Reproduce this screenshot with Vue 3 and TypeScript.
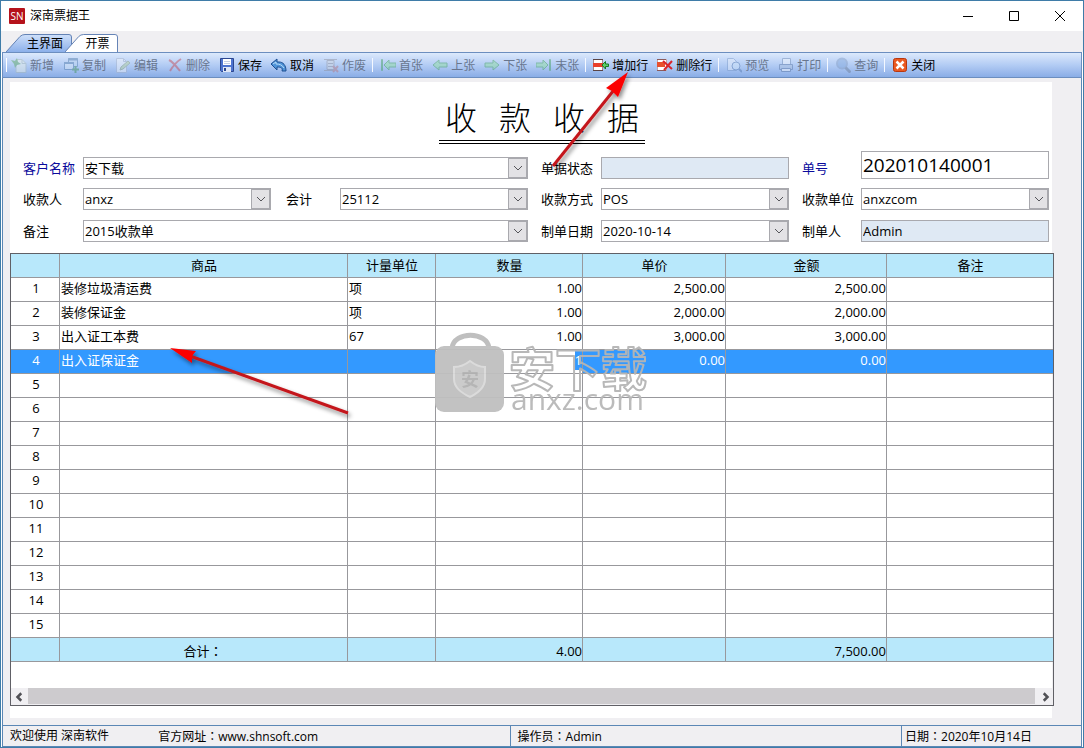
<script setup lang="ts">
import { nextTick, onMounted, ref } from 'vue'

interface Tool {
  icon: string
  label: string
  off?: boolean
  sep?: boolean
}

interface Line {
  item: string
  unit: string
  qty: string
  price: string
  amount: string
}

const tools: Tool[] = [
  { icon: 'new', label: '新增', off: true },
  { icon: 'copy', label: '复制', off: true },
  { icon: 'edit', label: '编辑', off: true },
  { icon: 'delete', label: '删除', off: true },
  { icon: 'save', label: '保存' },
  { icon: 'undo', label: '取消' },
  { icon: 'void', label: '作废', off: true },
  { icon: 'first', label: '首张', off: true, sep: true },
  { icon: 'prev', label: '上张', off: true },
  { icon: 'next', label: '下张', off: true },
  { icon: 'last', label: '末张', off: true },
  { icon: 'addrow', label: '增加行', sep: true },
  { icon: 'delrow', label: '删除行' },
  { icon: 'preview', label: '预览', off: true, sep: true },
  { icon: 'print', label: '打印', off: true },
  { icon: 'search', label: '查询', off: true, sep: true },
  { icon: 'close', label: '关闭', sep: true },
]

const filled: Line[] = [
  { item: '装修垃圾清运费', unit: '项', qty: '1.00', price: '2,500.00', amount: '2,500.00' },
  { item: '装修保证金', unit: '项', qty: '1.00', price: '2,000.00', amount: '2,000.00' },
  { item: '出入证工本费', unit: '67', qty: '1.00', price: '3,000.00', amount: '3,000.00' },
  { item: '出入证保证金', unit: '', qty: '1', price: '0.00', amount: '0.00' },
]
const blank: Line = { item: '', unit: '', qty: '', price: '', amount: '' }
const rows: Line[] = Array.from({ length: 15 }, (_, i) => filled[i] ?? blank)
const activeRow = 3

const heads = ['', '商品', '计量单位', '数量', '单价', '金额', '备注']
const titleChars = ['收', '款', '收', '据']
const root = ref<HTMLElement | null>(null)

onMounted(async () => {
  await nextTick()
  const editor = root.value?.querySelector<HTMLInputElement>('.cell-editor')
  editor?.focus()
  editor?.select()
})
</script>

<template>
  <div ref="root" class="window">
    <header class="titlebar">
      <svg class="logo" viewBox="0 0 16 16" aria-hidden="true">
        <rect width="16" height="16" rx="1" fill="#b5121b" />
        <text x="8" y="12" text-anchor="middle" font-size="10" fill="#fff">SN</text>
      </svg>
      <span class="app-name">深南票据王</span>
      <div class="win-buttons">
        <button type="button" aria-label="最小化"><svg viewBox="0 0 12 12"><path d="M1 6.500h10" /></svg></button>
        <button type="button" aria-label="最大化"><svg viewBox="0 0 12 12"><path d="M1.500 1.500h9v9h-9z" /></svg></button>
        <button type="button" aria-label="关闭窗口"><svg viewBox="0 0 12 12"><path d="M1 1l10 10M11 1L1 11" /></svg></button>
      </div>
    </header>

    <nav class="tabs">
      <button type="button" class="tab">
        <svg viewBox="0 0 66 18" preserveAspectRatio="none" aria-hidden="true">
          <defs>
            <linearGradient id="tabFill" x1="0" y1="0" x2="0" y2="1">
              <stop offset="0" stop-color="#cfe0fa" /><stop offset="1" stop-color="#8cb0ea" />
            </linearGradient>
          </defs>
          <path d="M0 18L14 2.500Q16 .5 19 .5H63Q65.500 .5 65.500 3V18" fill="url(#tabFill)" stroke="#6483b5" />
        </svg>
        <span>主界面</span>
      </button>
      <button type="button" class="tab current">
        <svg viewBox="0 0 54 18" preserveAspectRatio="none" aria-hidden="true">
          <path d="M0 18L14 2.500Q16 .5 19 .5H51Q53.500 .5 53.500 3V18" fill="#fff" stroke="#6483b5" />
        </svg>
        <span>开票</span>
      </button>
    </nav>

    <div class="toolbar" role="toolbar">
      <template v-for="t in tools" :key="t.label">
        <i v-if="t.sep" class="sep"></i>
        <button type="button" class="tool" :disabled="t.off">
          <svg viewBox="0 0 16 16" aria-hidden="true">
            <g v-if="t.icon === 'new'">
              <path d="M5 2.500h6l4 4v9H5z" fill="#eef4e8" stroke="#a9b9b4" />
              <path d="M11 2.500v4h4" fill="none" stroke="#a9b9b4" />
              <path d="M0 3l4 1 2-3 1 4 3 2-4 1-2 3-1-4z" fill="#57a55a" />
            </g>
            <g v-else-if="t.icon === 'copy'">
              <path d="M5.500 1.500h9v8h-9z" fill="#bcd5ef" stroke="#4c78a8" />
              <path d="M1.500 5.500h9v7h-9z" fill="#d9e8f6" stroke="#4c78a8" />
              <path d="M1 6h10M5 2.500h10" stroke="#4c78a8" stroke-width="2" />
              <path d="M12.500 9v7M9 12.500h7" stroke="#3d8f4f" stroke-width="2" />
            </g>
            <g v-else-if="t.icon === 'edit'">
              <path d="M1.500 1.500h7l3 3v11h-10z" fill="#f4f6fa" stroke="#a5b1c6" />
              <path d="M8.500 1.500v3h3" fill="none" stroke="#a5b1c6" />
              <path d="M5 13l1-3 7-6 2 2-7 6z" fill="#b9d395" stroke="#8ba078" />
            </g>
            <g v-else-if="t.icon === 'delete'">
              <path d="M2 3c4 2 7 6 11 11M14 2C9 5 6 9 3 14" fill="none" stroke="#c5454d" stroke-width="2" />
            </g>
            <g v-else-if="t.icon === 'save'">
              <path d="M1.500 1.500h13v13h-12l-1-1z" fill="#4d74d0" stroke="#2c4790" />
              <path d="M4 2h8v6H4z" fill="#fff" /><path d="M5 4.500h6M5 6.500h6" stroke="#c5cfe4" />
              <path d="M4 10h8v5H4z" fill="#dfe6f5" /><path d="M5 11h2v3H5z" fill="#2c4790" />
            </g>
            <g v-else-if="t.icon === 'undo'">
              <path d="M0 7l6-5v3h2c4 0 7 3 7 9h-4c1-3-1-4-5-4v3z" fill="#4f93d8" stroke="#1d4f91" />
              <path d="M2 7l3-2v2c4 0 6 1 8 4" fill="none" stroke="#b6dcf8" />
            </g>
            <g v-else-if="t.icon === 'void'">
              <path d="M4 3.500h7v9H4z" fill="#d3d8de" stroke="#8c8d98" />
              <path d="M1 2.500h13M1 13.500h10M5 6.500h5M5 9.500h5" stroke="#8c8d98" fill="none" />
              <path d="M10 9l5 6M15 9l-5 6" stroke="#b7757d" stroke-width="2" />
            </g>
            <g v-else-if="t.icon === 'first'">
              <path d="M4 8l5-5v3h7v4H9v3z" fill="#8fe09c" stroke="#3c9c55" />
              <path d="M1.500 2.500h1v11h-1z" fill="#8fe09c" stroke="#3c9c55" />
            </g>
            <g v-else-if="t.icon === 'prev'">
              <path d="M1 8l6-5v3h8v4H7v3z" fill="#8fe09c" stroke="#3c9c55" />
            </g>
            <g v-else-if="t.icon === 'next'">
              <path d="M15 8L9 3v3H1v4h8v3z" fill="#8fe09c" stroke="#3c9c55" />
            </g>
            <g v-else-if="t.icon === 'last'">
              <path d="M12 8L7 3v3H0v4h7v3z" fill="#8fe09c" stroke="#3c9c55" />
              <path d="M13.500 2.500h1v11h-1z" fill="#8fe09c" stroke="#3c9c55" />
            </g>
            <g v-else-if="t.icon === 'addrow'">
              <path d="M.5 2.500h9v11h-9z" fill="#fff" stroke="#a58a8a" />
              <path d="M0 6h10v4H0z" fill="#e8402c" /><path d="M0 2.500h10M0 13.500h10" stroke="#5b4444" />
              <path d="M9 8l3.500-3.500V7H15.500v2.500h-3V12z" fill="#5fd068" stroke="#157a26" />
            </g>
            <g v-else-if="t.icon === 'delrow'">
              <path d="M.5 2.500h9v11h-9z" fill="#fff" stroke="#c0a5a5" />
              <path d="M0 5h8v5H0z" fill="#e8502c" /><path d="M0 2.500h9M0 13.500h9" stroke="#8c5b5b" />
              <path d="M6 4l9 8M15 4l-8 9" stroke="#d9262c" stroke-width="2" />
            </g>
            <g v-else-if="t.icon === 'preview'">
              <path d="M1.500 1.500h6l3 3v9h-9z" fill="#e6eefa" stroke="#7897c6" />
              <circle cx="10" cy="9" r="4" fill="#d4e8fa" stroke="#5478ad" />
              <path d="M13 12l3 3" stroke="#5478ad" stroke-width="2" />
            </g>
            <g v-else-if="t.icon === 'print'">
              <path d="M4.500 1.500h8v6h-8z" fill="#f6f9fd" stroke="#6d87af" />
              <path d="M1.500 7.500h13v5h-13z" fill="#a9bedd" stroke="#54719f" />
              <path d="M3.500 11.500h9v3h-9z" fill="#f6f9fd" stroke="#54719f" />
            </g>
            <g v-else-if="t.icon === 'search'">
              <circle cx="7" cy="6.500" r="5" fill="#7fa6dc" stroke="#7f9ac2" stroke-width="2" />
              <path d="M10.500 10.500l5 5" stroke="#6b7c96" stroke-width="3" />
            </g>
            <g v-else>
              <rect x="1.500" y="1.500" width="13" height="13" rx="2" fill="#ea5a22" stroke="#b8360e" />
              <path d="M4.500 4.500l7 7M11.500 4.500l-7 7" stroke="#fff" stroke-width="2.500" />
            </g>
          </svg>
          <span>{{ t.label }}</span>
        </button>
      </template>
    </div>

    <main class="body">
      <section class="sheet">
        <div class="title-wrap">
          <h1 class="title"><span v-for="(c, i) in titleChars" :key="i">{{ c }}</span></h1>
        </div>

        <form class="form" @submit.prevent>
          <label class="link" for="customer">客户名称</label>
          <div class="combo wide">
            <select id="customer"><option>安下载</option></select>
            <span class="drop"><svg viewBox="0 0 10 6"><path d="M1 1l4 4 4-4" /></svg></span>
          </div>
          <label class="third" for="state">单据状态</label>
          <input id="state" class="readonly" type="text" value="" readonly />
          <label class="third link" for="number">单号</label>
          <input id="number" class="number" type="text" value="202010140001" />

          <label for="payee">收款人</label>
          <div class="combo">
            <select id="payee"><option>anxz</option></select>
            <span class="drop"><svg viewBox="0 0 10 6"><path d="M1 1l4 4 4-4" /></svg></span>
          </div>
          <label class="second" for="account">会计</label>
          <div class="combo">
            <select id="account"><option>25112</option></select>
            <span class="drop"><svg viewBox="0 0 10 6"><path d="M1 1l4 4 4-4" /></svg></span>
          </div>
          <label class="third" for="method">收款方式</label>
          <div class="combo">
            <select id="method"><option>POS</option></select>
            <span class="drop"><svg viewBox="0 0 10 6"><path d="M1 1l4 4 4-4" /></svg></span>
          </div>
          <label class="third" for="company">收款单位</label>
          <div class="combo">
            <select id="company"><option>anxzcom</option></select>
            <span class="drop"><svg viewBox="0 0 10 6"><path d="M1 1l4 4 4-4" /></svg></span>
          </div>

          <label for="note">备注</label>
          <div class="combo wide">
            <select id="note"><option>2015收款单</option></select>
            <span class="drop"><svg viewBox="0 0 10 6"><path d="M1 1l4 4 4-4" /></svg></span>
          </div>
          <label class="third" for="date">制单日期</label>
          <div class="combo">
            <input id="date" type="text" value="2020-10-14" />
            <button type="button" class="drop" aria-label="选择日期"><svg viewBox="0 0 10 6"><path d="M1 1l4 4 4-4" /></svg></button>
          </div>
          <label class="third" for="maker">制单人</label>
          <input id="maker" class="readonly" type="text" value="Admin" readonly />
        </form>

        <div class="grid">
          <table>
            <colgroup>
              <col class="c-no" /><col class="c-item" /><col class="c-unit" /><col class="c-qty" />
              <col class="c-price" /><col class="c-amount" /><col />
            </colgroup>
            <thead>
              <tr><th v-for="(h, i) in heads" :key="i" scope="col">{{ h }}</th></tr>
            </thead>
            <tbody>
              <tr v-for="(r, i) in rows" :key="i" :class="{ active: i === activeRow }">
                <td class="no">{{ i + 1 }}</td>
                <td>{{ r.item }}</td>
                <td>{{ r.unit }}</td>
                <td v-if="i === activeRow" class="num editing">
                  <input class="cell-editor" type="text" :value="r.qty" aria-label="数量" />
                </td>
                <td v-else class="num">{{ r.qty }}</td>
                <td class="num">{{ r.price }}</td>
                <td class="num">{{ r.amount }}</td>
                <td></td>
              </tr>
            </tbody>
            <tfoot>
              <tr>
                <td></td>
                <td class="total">合计<span class="colon">：</span></td>
                <td></td>
                <td class="num">4.00</td>
                <td></td>
                <td class="num">7,500.00</td>
                <td></td>
              </tr>
            </tfoot>
          </table>
          <div class="scroll">
            <button type="button" aria-label="向左滚动"><svg viewBox="0 0 8 8"><path d="M5 1L2 4l3 3" /></svg></button>
            <div class="thumb"></div>
            <button type="button" aria-label="向右滚动"><svg viewBox="0 0 8 8"><path d="M3 1l3 3-3 3" /></svg></button>
          </div>
        </div>
      </section>
    </main>

    <footer class="status">
      <div class="pane welcome">
        <span>欢迎使用 深南软件</span>
        <span>官方网址<span class="colon">：</span>www.shnsoft.com</span>
      </div>
      <div class="pane operator">操作员<span class="colon">：</span>Admin</div>
      <div class="pane today">日期<span class="colon">：</span>2020年10月14日</div>
    </footer>

    <svg class="overlay" width="1084" height="748" viewBox="0 0 1084 748" aria-hidden="true">
      <defs>
        <filter id="drop" x="-20%" y="-20%" width="140%" height="140%">
          <feDropShadow dx="2" dy="3" stdDeviation="2" flood-color="#000" flood-opacity=".45" />
        </filter>
      </defs>
      <g class="mark">
        <path d="M452 348c2-17 35-17 37 0" fill="none" stroke="#bcbcbc" stroke-width="5" />
        <rect x="435" y="346" width="69" height="66" rx="9" fill="#bfbfbf" />
        <path d="M470 361c5 4 10 6 15 6v12c0 9-7 14-15 18-8-4-16-9-16-18v-12c6 0 11-2 16-6z" fill="#c9c9c9" stroke="#dadada" stroke-width="2" />
        <text x="470" y="386" text-anchor="middle" font-size="18" font-weight="700" fill="#b2b2b2">安</text>
        <text x="509" y="386" font-size="46" font-weight="700" fill="none" stroke="#b5b5b5" stroke-width="2" stroke-linejoin="round">安下载</text>
        <text x="511" y="410" font-size="30" fill="#b8b8b8">anxz.com</text>
      </g>
      <g filter="url(#drop)">
        <path d="M553 166L614 90" stroke="#c4181c" stroke-width="3" />
        <path d="M628 72L606 88l6 3 6 6z" fill="#fb0505" />
      </g>
      <g filter="url(#drop)">
        <path d="M348 413L190 356" stroke="#c4181c" stroke-width="3" />
        <path d="M170 348l26 3-4 5v7z" fill="#fb0505" />
      </g>
    </svg>
  </div>
</template>

<style>
body {
  margin: 0;
}
</style>

<style scoped>
.window {
  position: relative;
  display: flex;
  flex-direction: column;
  min-height: 100vh;
  box-sizing: border-box;
  border: 1px solid #3f7ca8;
  background: #fff;
  color: #000;
  font: 13px/20px "Open Sans", "Noto Sans CJK SC", sans-serif;
}
.window *,
.window *::before {
  box-sizing: border-box;
}
button,
input,
select {
  margin: 0;
  padding: 0;
  border: 0;
  border-radius: 0;
  outline: 0;
  background: none;
  color: inherit;
  font: inherit;
}
.colon {
  font-family: "Noto Sans CJK TC", sans-serif;
}
.titlebar {
  display: flex;
  align-items: center;
  height: 30px;
  padding-left: 8px;
  font-size: 12px;
}
.logo {
  width: 16px;
  height: 16px;
  margin-right: 5px;
}
.win-buttons {
  display: flex;
  margin-left: auto;
}
.win-buttons button {
  display: flex;
  align-items: center;
  justify-content: center;
  width: 46px;
  height: 28px;
}
.win-buttons svg {
  width: 12px;
  height: 12px;
  fill: none;
  stroke: #000;
}
.tabs {
  display: flex;
  align-items: flex-end;
  height: 21px;
  padding-left: 5px;
  background: #f0eff2;
  font-size: 12px;
}
.tab {
  position: relative;
  width: 66px;
  height: 18px;
  padding: 1px 0 0 12px;
  line-height: 17px;
}
.tab.current {
  width: 53px;
  margin-left: -7px;
}
.tab svg {
  position: absolute;
  inset: 0;
  width: 100%;
  height: 100%;
}
.tab span {
  position: relative;
}
.toolbar {
  display: flex;
  align-items: center;
  height: 26px;
  margin: 0 1px;
  padding-left: 3px;
  border: 1px solid #6c8ebf;
  background: linear-gradient(#dce9fc, #b3ccf4 50%, #8aade6);
  font-size: 12px;
}
.toolbar::before {
  content: "";
  width: 1px;
  height: 14px;
  margin-right: -1px;
  background: #fff;
}
.tool {
  display: flex;
  align-items: center;
  gap: 3px;
  padding: 0 4px 0 5px;
  white-space: nowrap;
}
.tool span {
  padding-top: 1px;
}
.tool svg {
  width: 16px;
  height: 16px;
  fill: none;
}
.tool:disabled {
  color: #68768f;
}
.tool:disabled svg {
  opacity: 0.45;
}
.sep {
  width: 1px;
  height: 14px;
  margin: 0 2px;
  background: #f4f8ff;
}
.body {
  display: flex;
  flex: 1;
  margin: 0 1px;
  padding: 4px 29px 7px 7px;
  border: 0 solid #5b87b5;
  border-width: 0 1px;
  background: #f0eff2;
}
.sheet {
  display: flex;
  flex: 1;
  flex-direction: column;
  min-width: 0;
  padding: 14px 0 12px;
  background: #fff;
}
.title-wrap {
  display: flex;
  justify-content: center;
  padding-left: 22px;
}
.title {
  display: flex;
  gap: 22px;
  margin: 0;
  padding: 0 6px;
  border-bottom: 4px double #000;
  font-size: 32px;
  font-weight: 300;
  line-height: 44px;
}
.form {
  display: grid;
  grid-template-columns: 60px 1fr 69px 1fr 73px 1fr 72px 1fr;
  grid-template-rows: 28px 22px 23px;
  row-gap: 9px;
  align-items: end;
  margin: 7px 3px 11px 13px;
}
.form label {
  line-height: 22px;
  white-space: nowrap;
}
.link {
  color: #0a0a9c;
}
.second {
  padding-left: 15px;
}
.third {
  padding-left: 13px;
}
.form > input,
.combo {
  width: 100%;
  min-width: 0;
  height: 22px;
  border: 1px solid #a9a9ae;
  background: #fff;
}
.form > input {
  padding: 0 1px;
}
.form > .readonly {
  background: #dfe9f4;
}
.form > .number {
  height: 28px;
  font-size: 19px;
}
.combo {
  display: flex;
}
.combo.wide {
  grid-column: span 3;
}
.combo select,
.combo input {
  flex: 1;
  min-width: 0;
  height: 20px;
  padding-left: 1px;
  appearance: none;
}
.drop {
  display: flex;
  align-items: center;
  justify-content: center;
  width: 19px;
  height: 20px;
  border: 1px solid #a9a9ae;
  background: #e3e2e5;
  pointer-events: none;
}
.drop svg {
  width: 10px;
  height: 6px;
  fill: none;
  stroke: #55555a;
}
.grid {
  display: flex;
  flex: 1;
  flex-direction: column;
  margin-right: -2px;
  border: 1px solid #606066;
}
table {
  width: 100%;
  border-spacing: 0;
  table-layout: fixed;
}
.c-no {
  width: 49px;
}
.c-item {
  width: 288px;
}
.c-unit {
  width: 88px;
}
.c-qty {
  width: 147px;
}
.c-price {
  width: 143px;
}
.c-amount {
  width: 161px;
}
th,
td {
  height: 24px;
  padding: 0 0 3px 1px;
  border: 0 solid #98989c;
  border-width: 0 1px 1px 0;
  font-weight: 400;
  line-height: 20px;
  vertical-align: top;
  white-space: nowrap;
}
th:last-child,
td:last-child {
  border-right: 0;
}
th {
  padding-top: 1px;
  padding-bottom: 2px;
  background: #b8e8fb;
}
tfoot td {
  padding-top: 3px;
  padding-bottom: 0;
  background: #b8e8fb;
}
td.no {
  padding-left: 2px;
  text-align: center;
}
td.total {
  padding-right: 2px;
  text-align: center;
}
td.num {
  padding-left: 0;
  text-align: right;
}
.active td {
  background: #3399ff;
  color: #fff;
}
.active td.editing {
  padding: 0;
  background: #fff;
  color: #000;
}
.cell-editor {
  display: block;
  width: 100%;
  height: 20px;
  margin-bottom: 3px;
  line-height: 20px;
  text-align: right;
}
.cell-editor::selection {
  background: #3399ff;
  color: #fff;
}
.scroll {
  display: flex;
  height: 17px;
  margin-top: auto;
  background: #f0eff2;
}
.scroll button {
  display: flex;
  align-items: center;
  justify-content: center;
  width: 17px;
}
.scroll button svg {
  width: 10px;
  height: 10px;
  fill: none;
  stroke: #505055;
  stroke-width: 2;
}
.thumb {
  flex: 1;
  margin: 0 1px 1px 0;
  background: #cdcbce;
}
.status {
  display: flex;
  height: 22px;
  margin: 0 1px;
  border: 1px solid #5b87b5;
  background: #f0eff2;
  font-size: 12px;
  line-height: 20px;
}
.pane {
  white-space: nowrap;
}
.welcome {
  display: flex;
  flex: 508;
  gap: 49px;
  padding-left: 7px;
}
.operator {
  flex: 390;
  padding-left: 7px;
  border-left: 1px solid #5b87b5;
}
.today {
  width: 180px;
  padding-left: 3px;
  border-left: 1px solid #5b87b5;
}
.overlay {
  position: absolute;
  top: -1px;
  left: -1px;
  pointer-events: none;
}
.mark {
  opacity: 0.95;
}
</style>
